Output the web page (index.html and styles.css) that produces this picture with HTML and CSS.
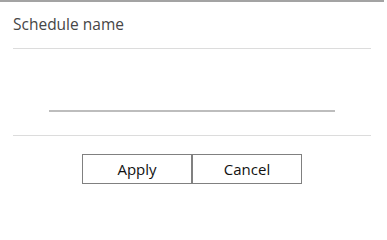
FILE: index.html
```html
<!DOCTYPE html>
<html>
<head>
<meta charset="utf-8">
<link rel="stylesheet" href="styles.css">
</head>
<body>
<div class="dialog">
  <div class="header"><span class="title">Schedule name</span></div>
  <div class="body">
    <div class="field"></div>
  </div>
  <div class="footer">
    <button class="btn">Apply</button><button class="btn">Cancel</button>
  </div>
</div>
</body>
</html>
```
FILE: styles.css
```css
html, body {
  margin: 0;
  padding: 0;
  background: #ffffff;
}
.dialog {
  width: 358px;
  height: 198px;
  border-top: 2px solid #a3a3a3;
  padding: 0 13px;
  box-sizing: content-box;
  font-family: "Open Sans", "Noto Sans", sans-serif;
}
.header {
  height: 47px;
  border-bottom: 1px solid #dcdcdc;
  box-sizing: border-box;
  padding-top: 11px;
}
.title {
  font-size: 15.5px;
  line-height: 20px;
  color: #464646;
}
.body {
  height: 87px;
  border-bottom: 1px solid #dcdcdc;
  box-sizing: border-box;
  display: flex;
  justify-content: center;
  padding-top: 61px;
}
.field {
  width: 286px;
  height: 2px;
  background: #bdbdbd;
}
.footer {
  display: flex;
  justify-content: center;
  padding-top: 18px;
}
.btn {
  width: 110px;
  height: 30px;
  margin: 0;
  padding: 0;
  background: #ffffff;
  border: 1px solid #808080;
  font-family: "Open Sans", "Noto Sans", sans-serif;
  font-size: 15px;
  color: #111111;
  border-radius: 0;
}
```
